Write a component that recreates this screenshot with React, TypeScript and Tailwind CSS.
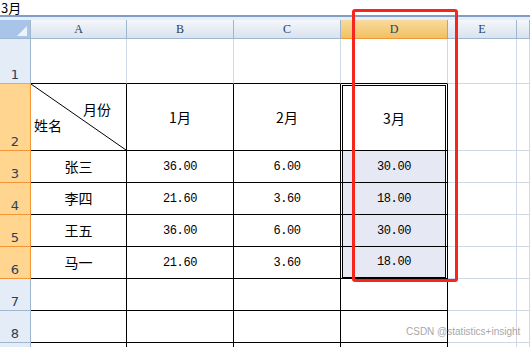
const COLS = ["A", "B", "C", "D", "E", ""];
const GRID = "border-[#d0d7e5]";

const ROWS = [
  { n: 1, h: "h-[45px]" },
  { n: 2, h: "h-[67px]" },
  { n: 3, h: "h-[32px]" },
  { n: 4, h: "h-[32px]" },
  { n: 5, h: "h-[32px]" },
  { n: 6, h: "h-[32px]" },
  { n: 7, h: "h-[32px]" },
  { n: 8, h: "h-[32px]" },
  { n: 9, h: "h-[32px]" },
];

const DATA: Record<number, string[]> = {
  2: ["", "1月", "2月", "3月"],
  3: ["张三", "36.00", "6.00", "30.00"],
  4: ["李四", "21.60", "3.60", "18.00"],
  5: ["王五", "36.00", "6.00", "30.00"],
  6: ["马一", "21.60", "3.60", "18.00"],
};

const WIDTHS = ["w-[96px]", "w-[107px]", "w-[107px]", "w-[107px]", "w-[69px]", "flex-1"];

function DiagonalHeader() {
  return (
    <div className="relative flex h-full flex-col justify-center">
      <svg className="absolute inset-0 h-full w-full" preserveAspectRatio="none" viewBox="0 0 100 100">
        <line x1="0" y1="0" x2="100" y2="100" stroke="#000" strokeWidth="1" vectorEffect="non-scaling-stroke" />
      </svg>
      <span className="mr-[15px] self-end text-[14px] leading-[16px]">月份</span>
      <span className="ml-[3px] self-start text-[14px] leading-[16px]">姓名</span>
    </div>
  );
}

function Cell({ row, col }: { row: number; col: number }) {
  const inTable = col < 4 && row >= 2;
  const right = inTable ? "border-black" : GRID;
  const bottom = col < 4 && row >= 1 ? "border-b-black" : "";
  const text = DATA[row]?.[col] ?? "";
  const selected = col === 3 && row >= 2 && row <= 6;
  const isNum = /^[0-9.]+$/.test(text);

  const content =
    row === 2 && col === 0 ? (
      <DiagonalHeader />
    ) : (
      <div
        className={
          "flex h-full items-center justify-center " +
          (isNum
            ? "font-['Liberation_Mono',monospace] text-[12px] tracking-[-0.4px]"
            : "text-[14px]")
        }
      >
        {text}
      </div>
    );

  return (
    <div className={`${WIDTHS[col]} shrink-0 border-r border-b ${right} ${GRID} ${bottom}`}>
      {selected ? (
        <div
          className={
            "mx-px h-full border-x border-black " +
            (row === 2 ? "" : "bg-[#e6e9f3] ") +
            (row === 2 ? "mt-px h-[calc(100%-1px)] border-t " : "") +
            (row === 6 ? "mb-px h-[calc(100%-1px)] border-b " : "")
          }
        >
          {content}
        </div>
      ) : (
        content
      )}
    </div>
  );
}

export default function App() {
  return (
    <div className="relative h-[347px] w-[530px] overflow-hidden bg-white font-['Noto_Sans_CJK_SC',sans-serif] text-black">
      {/* formula bar */}
      <div className="h-[15px] pl-px text-[13px] leading-[15px]">3月</div>
      <div className="h-[2px] bg-[#7f9dc7]" />
      <div className="h-[3px] bg-[#e6edf6]" />

      {/* column headers */}
      <div className="flex h-[19px]">
        <div className="relative w-[31px] shrink-0 border-r border-b border-[#9eb6ce] bg-[#a9c4e9]">
          <svg className="absolute right-[3px] bottom-[2px]" width="10" height="10" viewBox="0 0 10 10">
            <polygon points="10,0 10,10 0,10" fill="#eef3fa" />
          </svg>
        </div>
        {COLS.map((c, i) => (
          <div
            key={i}
            className={
              `${WIDTHS[i]} shrink-0 flex items-center justify-center border-r border-b font-['Liberation_Serif',serif] text-[12px] text-[#27415f] ` +
              (c === "D"
                ? "border-[#f29536] bg-gradient-to-b from-[#f9da9f] to-[#f1c15f]"
                : "border-[#9eb6ce] bg-gradient-to-b from-[#f4f7fb] to-[#d9e2ef]")
            }
          >
            {c}
          </div>
        ))}
      </div>

      {ROWS.map(({ n, h }) => {
        const sel = n >= 2 && n <= 6;
        return (
          <div key={n} className={`flex ${h}`}>
            <div
              className={
                "flex w-[31px] shrink-0 items-end justify-center border-r border-b pb-[1px] font-['DejaVu_Sans',sans-serif] text-[13px] leading-[14px] text-[#27415f] " +
                (sel ? "border-[#f29536] bg-[#ffd58f]" : "border-[#9eb6ce] bg-[#e4ecf7]")
              }
            >
              {n < 9 ? n : ""}
            </div>
            {COLS.map((_, i) => (
              <Cell key={i} row={n} col={i} />
            ))}
          </div>
        );
      })}

      {/* annotation */}
      <div className="absolute top-[9px] left-[352px] h-[273px] w-[106px] rounded-[3px] border-[3px] border-[#f5261c]" />
      <div className="absolute top-[326px] left-[406px] whitespace-nowrap font-['Liberation_Sans',sans-serif] text-[10px] leading-[12px] text-[#a8a8a8]">
        CSDN @statistics+insight
      </div>
    </div>
  );
}
